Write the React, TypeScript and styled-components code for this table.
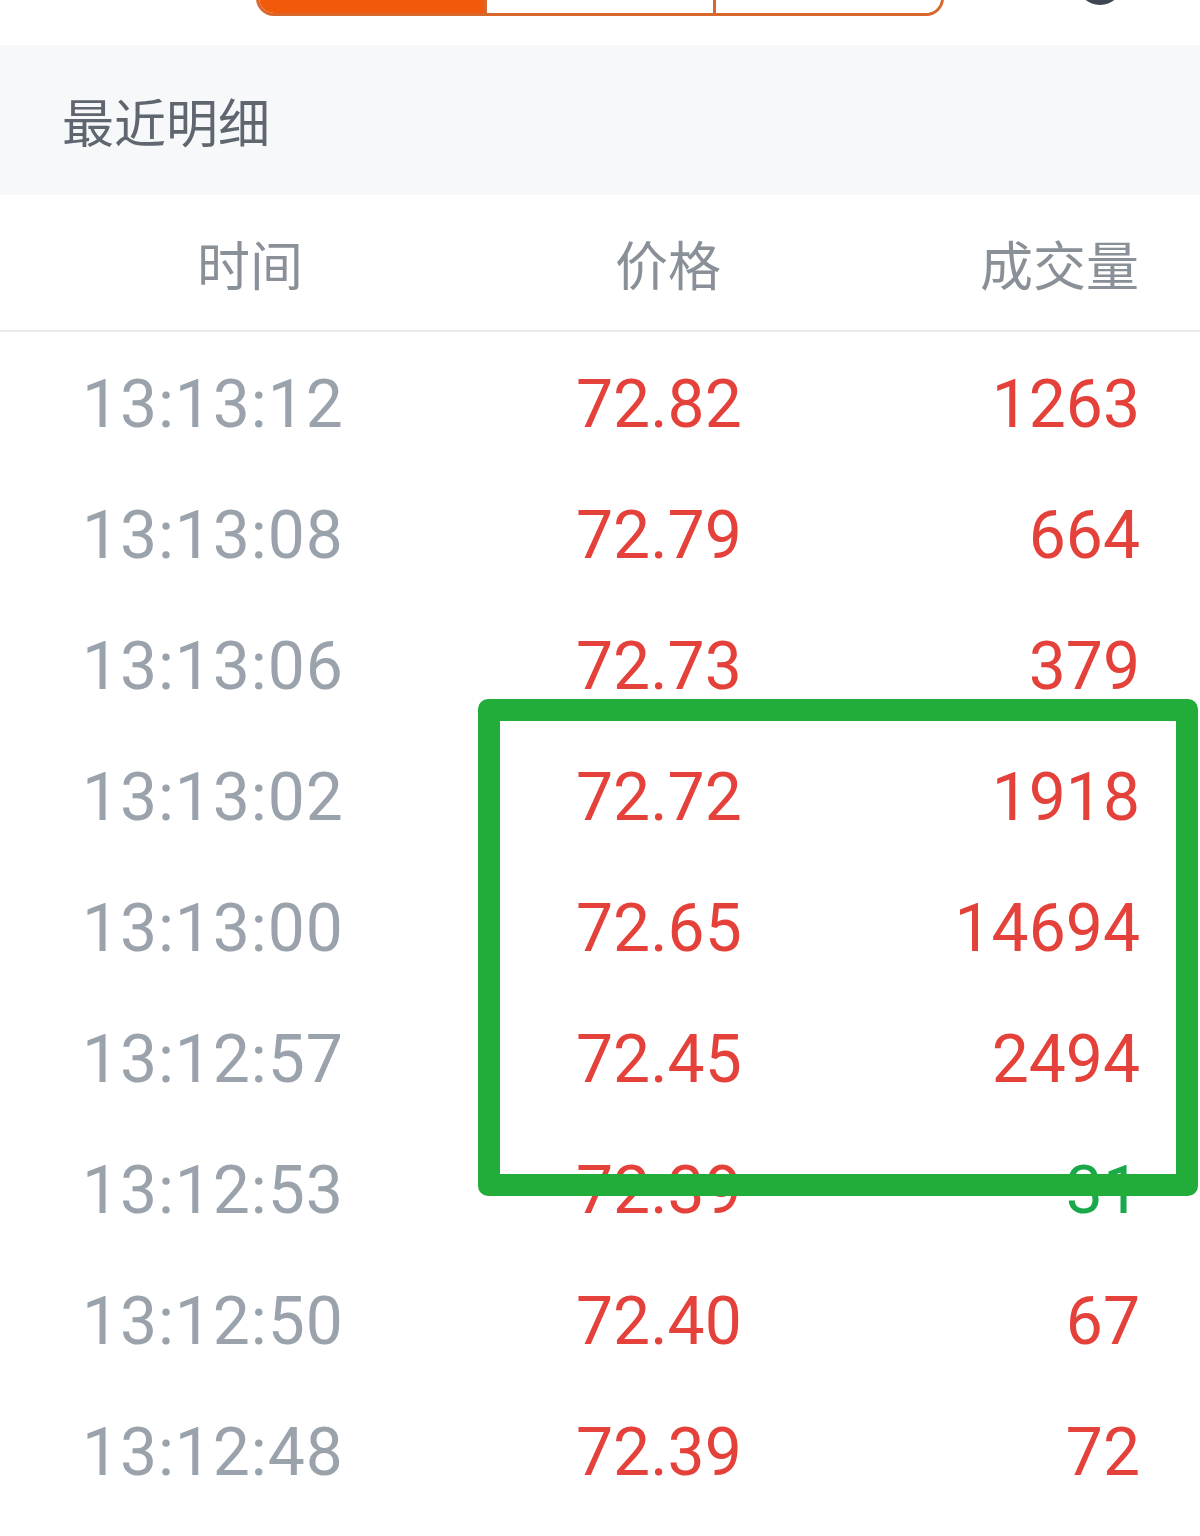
import React from "react";
import styled, { createGlobalStyle } from "styled-components";

const GlobalStyle = createGlobalStyle`
  html, body {
    margin: 0;
    padding: 0;
    background: #fff;
  }
  body {
    font-family: Roboto, "Noto Sans CJK SC", sans-serif;
  }
`;

const Page = styled.div`
  position: relative;
  width: 1200px;
  height: 1536px;
  overflow: hidden;
  background: #fff;
`;

const TopBar = styled.div`
  display: flex;
  align-items: flex-start;
  height: 45px;
  overflow: hidden;
  background: #fff;
`;

const BackArrow = styled.svg`
  width: 44px;
  height: 44px;
  margin-left: 56px;
  margin-top: -42px;
  flex-shrink: 0;
`;

const Segmented = styled.div`
  display: flex;
  width: 688px;
  height: 70px;
  margin-left: 156px;
  margin-top: -54px;
  flex-shrink: 0;
  box-sizing: border-box;
  border: 3px solid #d9672b;
  border-radius: 0 0 18px 18px;
  overflow: hidden;
`;

const Segment = styled.div<{ $active?: boolean }>`
  flex: 1;
  background: ${(p) => (p.$active ? "#f25a0b" : "#fff")};
  & + & {
    border-left: 3px solid #d9672b;
  }
`;

const Avatar = styled.div`
  width: 46px;
  height: 46px;
  margin-left: 133px;
  margin-top: -41px;
  border-radius: 50%;
  background: #3e4651;
  flex-shrink: 0;
`;

const SectionTitle = styled.div`
  display: flex;
  align-items: center;
  height: 150px;
  padding-left: 62px;
  background: #f7f8fa;
  font-family: "Noto Sans CJK SC", sans-serif;
  font-size: 52px;
  color: #5f6670;
`;

const Grid = styled.div`
  display: grid;
  grid-template-columns: 500px 336px 1fr;
  align-items: center;
`;

const HeaderRow = styled(Grid)`
  height: 135px;
  border-bottom: 2px solid #e8eaec;
  font-family: "Noto Sans CJK SC", sans-serif;
  font-size: 53px;
  color: #8a9098;
`;

const HeadCell = styled.div<{ $align: "center" | "right" }>`
  text-align: ${(p) => p.$align};
  padding-right: ${(p) => (p.$align === "right" ? "61px" : "0")};
`;

const List = styled.div`
  padding-top: 7px;
`;

const Row = styled(Grid)`
  height: 131px;
  font-family: Roboto, sans-serif;
  font-size: 66px;
  line-height: 1;
`;

const TimeCell = styled.div`
  padding-left: 82px;
  letter-spacing: 0.9px;
  color: #9aa2ab;
`;

const PriceCell = styled.div`
  padding-left: 76px;
  color: #e5413b;
`;

const VolumeCell = styled.div<{ $down?: boolean }>`
  text-align: right;
  padding-right: 60px;
  color: ${(p) => (p.$down ? "#19a84a" : "#e5413b")};
`;

const Highlight = styled.div`
  position: absolute;
  left: 478px;
  top: 699px;
  width: 720px;
  height: 497px;
  box-sizing: border-box;
  border: 22px solid #22ad3b;
  border-radius: 10px;
  pointer-events: none;
`;

const trades = [
  { time: "13:13:12", price: "72.82", volume: "1263" },
  { time: "13:13:08", price: "72.79", volume: "664" },
  { time: "13:13:06", price: "72.73", volume: "379" },
  { time: "13:13:02", price: "72.72", volume: "1918" },
  { time: "13:13:00", price: "72.65", volume: "14694" },
  { time: "13:12:57", price: "72.45", volume: "2494" },
  { time: "13:12:53", price: "72.39", volume: "31", down: true },
  { time: "13:12:50", price: "72.40", volume: "67" },
  { time: "13:12:48", price: "72.39", volume: "72" },
];

const App: React.FC = () => {
  return (
    <Page>
      <GlobalStyle />
      <TopBar>
        <BackArrow viewBox="0 0 44 44">
          <path
            d="M26 4 L14 22 L26 40"
            fill="none"
            stroke="#9aa0a8"
            strokeWidth="3"
            strokeLinecap="round"
          />
        </BackArrow>
        <Segmented>
          <Segment $active />
          <Segment />
          <Segment />
        </Segmented>
        <Avatar />
      </TopBar>

      <SectionTitle>最近明细</SectionTitle>

      <HeaderRow>
        <HeadCell $align="center">时间</HeadCell>
        <HeadCell $align="center">价格</HeadCell>
        <HeadCell $align="right">成交量</HeadCell>
      </HeaderRow>

      <List>
        {trades.map((t) => (
          <Row key={t.time}>
            <TimeCell>{t.time}</TimeCell>
            <PriceCell>{t.price}</PriceCell>
            <VolumeCell $down={t.down}>{t.volume}</VolumeCell>
          </Row>
        ))}
      </List>

      {/* 标注框 */}
      <Highlight />
    </Page>
  );
};

export default App;
